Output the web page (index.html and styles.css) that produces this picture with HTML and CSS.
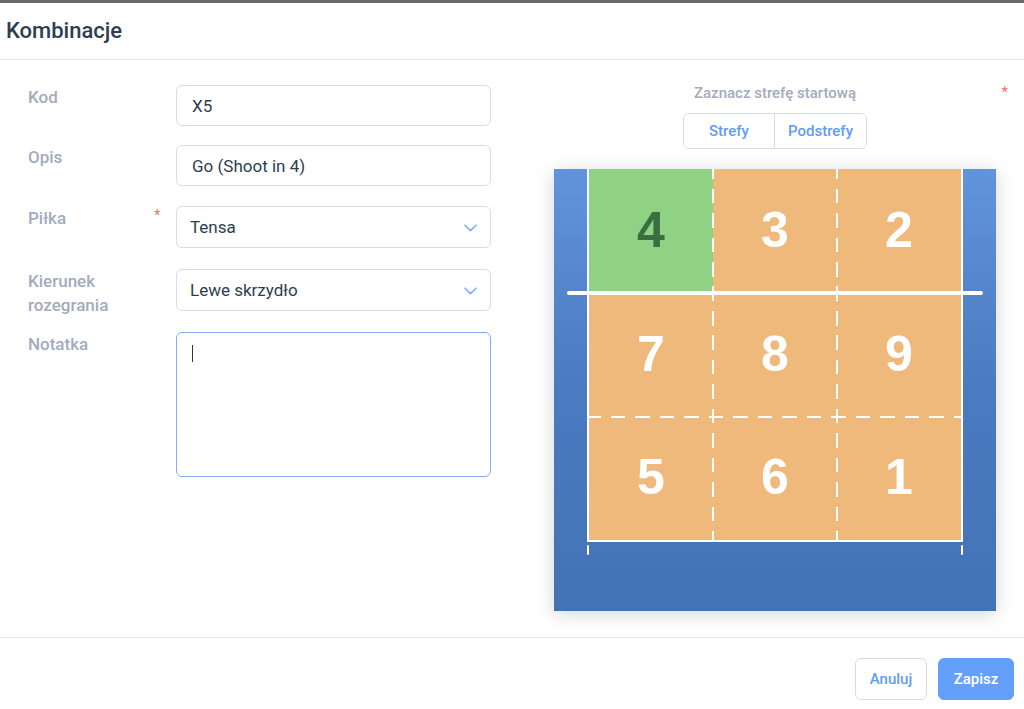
FILE: index.html
```html
<!DOCTYPE html>
<html lang="pl">
<head>
<meta charset="utf-8">
<title>Kombinacje</title>
<link rel="stylesheet" href="styles.css">
</head>
<body>
<div class="modal">
  <header class="modal-header">
    <h1 class="modal-title">Kombinacje</h1>
  </header>
  <main class="modal-body">
    <form class="form">
      <div class="field">
        <label class="field-label">Kod</label>
        <div class="input">X5</div>
      </div>
      <div class="field field-opis">
        <label class="field-label">Opis</label>
        <div class="input">Go (Shoot in 4)</div>
      </div>
      <div class="field field-select">
        <label class="field-label">Piłka <span class="req">*</span></label>
        <div class="input select">
          <span>Tensa</span>
          <svg class="chevron" viewBox="0 0 13 8" width="13" height="8"><path d="M1 1.2 L6.5 6.6 L12 1.2" fill="none" stroke="#7eaef5" stroke-width="1.6" stroke-linecap="round" stroke-linejoin="round"/></svg>
        </div>
      </div>
      <div class="field field-select">
        <label class="field-label">Kierunek rozegrania</label>
        <div class="input select">
          <span>Lewe skrzydło</span>
          <svg class="chevron" viewBox="0 0 13 8" width="13" height="8"><path d="M1 1.2 L6.5 6.6 L12 1.2" fill="none" stroke="#7eaef5" stroke-width="1.6" stroke-linecap="round" stroke-linejoin="round"/></svg>
        </div>
      </div>
      <div class="field field-area">
        <label class="field-label">Notatka</label>
        <div class="textarea"><span class="caret"></span></div>
      </div>
    </form>

    <section class="zone-picker">
      <div class="zp-title">Zaznacz strefę startową</div>
      <span class="req req-zone">*</span>
      <div class="seg">
        <button type="button" class="seg-btn seg-first">Strefy</button>
        <button type="button" class="seg-btn seg-second">Podstrefy</button>
      </div>
      <div class="court">
        <div class="court-inner">
          <div class="zone zone-active">4</div>
          <div class="zone">3</div>
          <div class="zone">2</div>
          <div class="zone">7</div>
          <div class="zone">8</div>
          <div class="zone">9</div>
          <div class="zone">5</div>
          <div class="zone">6</div>
          <div class="zone">1</div>
          <div class="dash-v dash-v1"></div>
          <div class="dash-v dash-v2"></div>
          <div class="dash-h"></div>
        </div>
        <div class="net"></div>
        <div class="tick tick-left"></div>
        <div class="tick tick-right"></div>
      </div>
    </section>
  </main>
  <footer class="modal-footer">
    <button type="button" class="btn btn-cancel">Anuluj</button>
    <button type="button" class="btn btn-save">Zapisz</button>
  </footer>
</div>
</body>
</html>
```

FILE: styles.css
```css
* { box-sizing: border-box; }

body {
  margin: 0;
  background: #fff;
  font-family: Roboto, "Noto Sans", "Liberation Sans", sans-serif;
}

.modal {
  border-top: 3px solid #6b6b6b;
}

.modal-header {
  height: 57px;
  border-bottom: 1px solid #e3e6ed;
  display: flex;
  align-items: center;
  padding: 0 0 2px 6px;
}

.modal-title {
  margin: 0;
  font-size: 22px;
  font-weight: 500;
  color: #2c3e50;
}

.modal-body {
  display: flex;
  gap: 63px;
  padding: 25px 0 26px 28px;
  border-bottom: 1px solid #e3e6ed;
}

.form {
  width: 463px;
  display: flex;
  flex-direction: column;
}

.field {
  display: flex;
  align-items: flex-start;
  height: 41px;
}

.field + .field { margin-top: 20px; }
.field.field-opis { margin-top: 19px; }
.field-select + .field { margin-top: 21px; }

.field-select { height: 42px; }
.field-area { height: 145px; }

.field-label {
  width: 148px;
  flex: none;
  padding-right: 30px;
  font-size: 17px;
  line-height: 24px;
  font-weight: 500;
  color: #a3abbf;
  position: relative;
}

.req {
  color: #f07070;
  font-size: 15px;
  font-weight: 400;
}

.field-label .req {
  position: absolute;
  left: 126px;
  top: -3px;
}

.input {
  width: 315px;
  height: 100%;
  border: 1px solid #d8dde7;
  border-radius: 6px;
  padding: 0 15px;
  display: flex;
  align-items: center;
  font-size: 17px;
  color: #2c3e50;
}

.select {
  padding: 0 13px 0 13px;
  justify-content: space-between;
}

.chevron { display: block; margin-top: 1px; }

.textarea {
  width: 315px;
  height: 100%;
  border: 1px solid #80aff5;
  border-radius: 6px;
  padding: 12px 15px;
}

.caret {
  display: block;
  width: 1px;
  height: 17px;
  background: #333;
}

.zone-picker {
  width: 442px;
  display: flex;
  flex-direction: column;
  align-items: center;
  position: relative;
}

.zp-title {
  font-size: 15px;
  line-height: 16px;
  font-weight: 500;
  color: #a3abbf;
}

.req-zone {
  position: absolute;
  right: -12px;
  top: -2px;
}

.seg {
  margin-top: 12px;
  display: flex;
  height: 36px;
  border: 1px solid #d5dbe6;
  border-radius: 6px;
  overflow: hidden;
}

.seg-btn {
  border: 0;
  background: #fff;
  padding: 0;
  font-family: inherit;
  font-size: 15px;
  font-weight: 500;
  color: #5f9cf5;
}

.seg-first { width: 91px; border-right: 1px solid #d5dbe6; }
.seg-second { width: 91px; }

.court {
  margin-top: 20px;
  width: 442px;
  height: 442px;
  padding: 0 33px;
  position: relative;
  background: linear-gradient(180deg, #6294dc 0%, #4a7abf 50%, #4472b7 100%);
  box-shadow: 0 3px 18px rgba(0, 0, 0, 0.17);
}

.court-inner {
  position: relative;
  width: 376px;
  display: grid;
  grid-template-columns: repeat(3, 124px);
  grid-template-rows: 124px 124px 123px;
  border: 2px solid #fff;
  border-top: 0;
}

.zone {
  display: flex;
  align-items: center;
  justify-content: center;
  background: #efb97b;
  color: #fff;
  font-family: "Liberation Sans", Arial, sans-serif;
  font-weight: 700;
  font-size: 50px;
  padding-bottom: 3px;
}

.zone-active {
  background: #8fd283;
  color: #3b6e3f;
}

.dash-v {
  position: absolute;
  top: 0;
  bottom: 0;
  width: 2px;
  background: repeating-linear-gradient(180deg, #fff 0 9.5px, transparent 9.5px 19.5px, #fff 19.5px 24.5px);
}

.dash-v1 { left: 123px; }
.dash-v2 { left: 247px; }

.dash-h {
  position: absolute;
  left: 0;
  right: 0;
  top: 247px;
  height: 2px;
  background: repeating-linear-gradient(90deg, #fff 0 12px, transparent 12px 22px, #fff 22px 24.5px);
}

.net {
  position: absolute;
  left: 13px;
  top: 122px;
  width: 416px;
  height: 4px;
  border-radius: 2px;
  background: #fff;
}

.tick {
  position: absolute;
  top: 376px;
  width: 2px;
  height: 10px;
  border-radius: 1px;
  background: #fff;
}

.tick-left { left: 33px; }
.tick-right { left: 407px; }

.modal-footer {
  display: flex;
  justify-content: flex-end;
  gap: 11px;
  padding: 20px 10px 0 0;
}

.btn {
  height: 42px;
  border-radius: 6px;
  font-family: inherit;
  font-size: 15px;
  font-weight: 500;
  padding: 0;
}

.btn-cancel {
  width: 72px;
  background: #fff;
  border: 1px solid #d5dbe6;
  color: #5f9cf5;
}

.btn-save {
  width: 76px;
  background: #64a0fa;
  border: 1px solid #64a0fa;
  color: #fff;
}
```
